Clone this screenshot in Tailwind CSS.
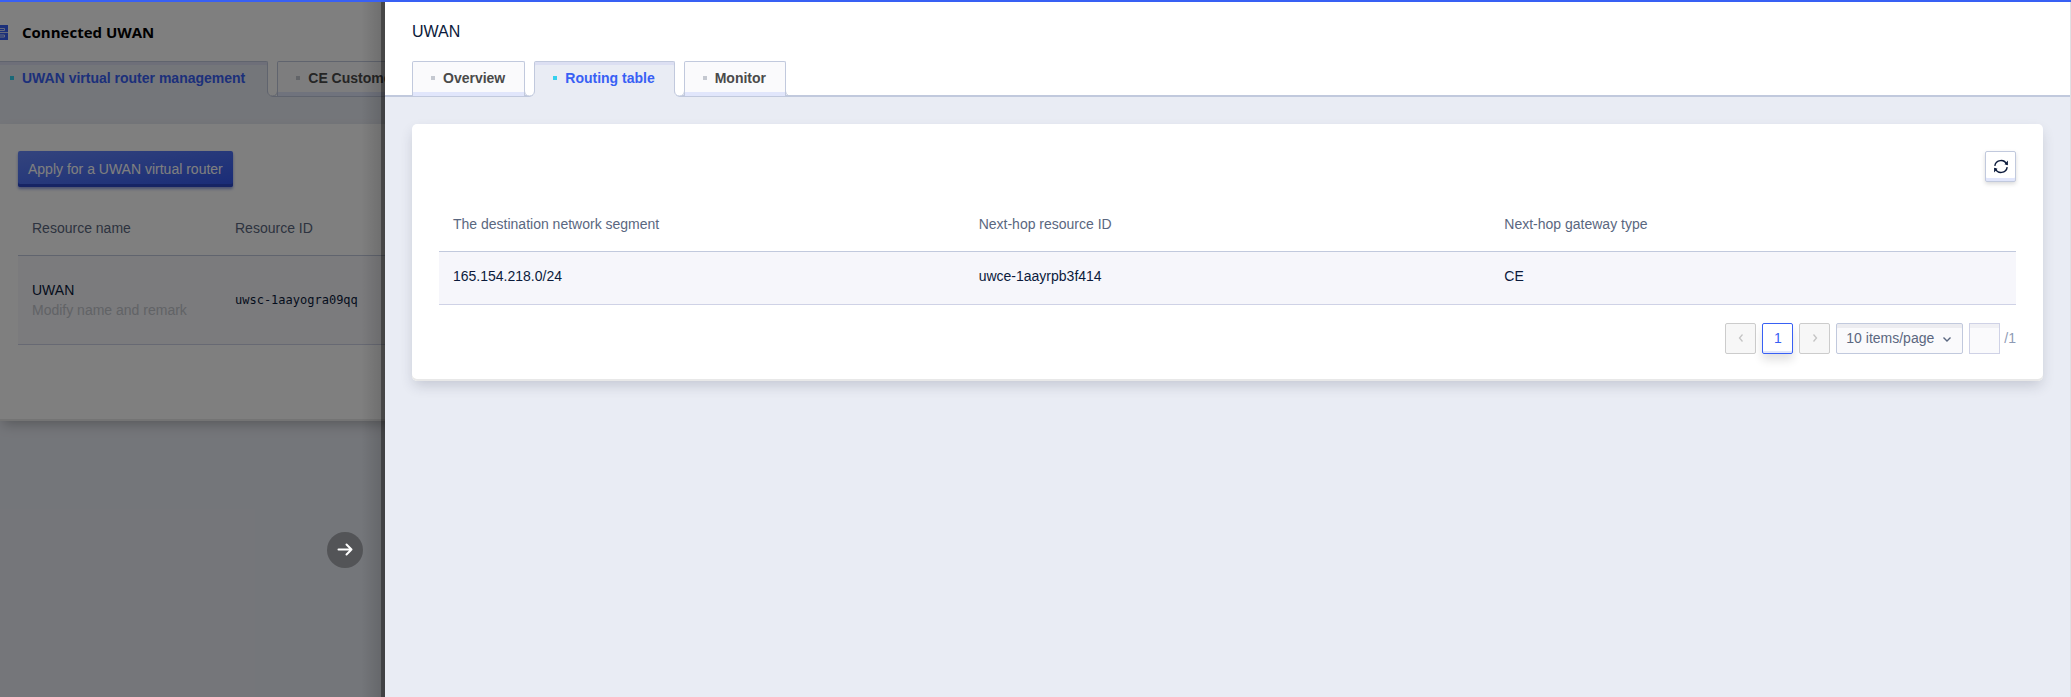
<!DOCTYPE html>
<html lang="en">
<head>
    <meta charset="UTF-8">
    <meta name="viewport" content="width=device-width, initial-scale=1.0">
    <title>UWAN</title>
    <script src="https://cdn.jsdelivr.net/npm/@tailwindcss/browser@4"></script>
</head>
<body class="min-h-screen flex overflow-hidden bg-[#e9ecf4] font-['Liberation_Sans',Arial,sans-serif] text-sm text-[#0b1a3b]">
    <!-- Loading bar -->
    <div class="absolute top-0 inset-x-0 h-0.5 bg-[#3860f4] z-20"></div>

    <!-- Page behind the drawer -->
    <div class="relative w-[385px] shrink-0 overflow-hidden">
        <div class="w-[900px]">
            <header class="bg-white pt-4 border-b border-[#c1c9dd]">
                <div class="flex items-center h-[33px] gap-[14px]">
                    <svg class="w-2 h-[15px]" viewBox="0 0 8 15" fill="none">
                        <path d="M0 0h8v15H0z" fill="#3860f4"/>
                        <path d="M0 3.500h4.500V5.500H0M0 7.500h8M0 10h4.500v2H0" stroke="#c9d3fb"/>
                    </svg>
                    <h1 class="font-['Open_Sans',sans-serif] text-[15px] font-bold text-black">Connected UWAN</h1>
                </div>
                <nav class="flex mt-3 h-[35px]">
                    <a href="#" class="flex items-center gap-2 h-9 pb-[3px] pl-[10px] pr-[22px] border-t border-r border-[#c1c9dd] rounded-tr-xs bg-[#e9ecf4] font-bold text-[#3860f4] shadow-[inset_0_3px_#dcdff2]">
                        <span class="size-1 bg-[#35d0ee]"></span>UWAN virtual router management
                    </a>
                    <svg class="w-[11px] h-9 -mx-px" viewBox="0 0 11 36" fill="none">
                        <path d="M6 36Q1 35 .5 31H0v5z" fill="#e9ecf4"/>
                        <path d="M.5 30Q1 35 5.500 35Q10 35 10.500 30" stroke="#c1c9dd"/>
                    </svg>
                    <a href="#" class="flex items-center gap-2 h-[35px] pb-[2px] px-[18px] border border-b-0 border-[#c1c9dd] rounded-t-xs bg-[#fafafc] font-bold text-[#4a4a4a] shadow-[inset_0_-4px_#e1e6fb]">
                        <span class="size-1 bg-[#c4c8d0]"></span>CE Customer gateway management
                    </a>
                </nav>
            </header>
            <main class="mt-[27px] h-[297px] bg-white pl-[18px] pt-[27px] shadow-[inset_0_-2px_#e8e8e8,0_6px_12px_-3px_rgba(0,0,0,0.25)]">
                <button type="button" class="h-9 px-[10px] rounded-xs bg-linear-to-br from-[#6788fb] to-[#3356ee] text-white shadow-[inset_0_-3px_#2c49c8,0_2px_3px_rgba(40,70,200,0.5)]">Apply for a UWAN virtual router</button>
                <table class="w-full mt-[15px] text-left">
                    <thead>
                        <tr class="h-[53px] border-b border-[#c1c9dd] text-[#5a6780]">
                            <th class="w-[203px] pl-[14px] font-normal">Resource name</th>
                            <th class="pl-[14px] font-normal">Resource ID</th>
                        </tr>
                    </thead>
                    <tbody>
                        <tr class="h-[89px] border-b border-[#cfd2e6] bg-[#f6f6fb]">
                            <td class="pl-[14px]">UWAN<br><a href="#" class="text-[#c3c6cc]">Modify name and remark</a></td>
                            <td class="pl-[14px] font-['DejaVu_Sans_Mono',monospace] text-xs">uwsc-1aayogra09qq</td>
                        </tr>
                    </tbody>
                </table>
            </main>
        </div>
        <div class="absolute inset-0 bg-black/50"></div>
        <div class="absolute inset-y-0 right-0 w-6 bg-linear-to-r from-transparent to-black/15"></div>
        <div class="absolute inset-y-0 right-0 w-1 bg-black/35"></div>
        <button type="button" aria-label="Close drawer" class="absolute top-[532px] left-[327px] size-9 rounded-full bg-[#535457] flex items-center justify-center">
            <svg class="size-4" viewBox="0 0 16 16" fill="none" stroke="#fff" stroke-width="2" stroke-linecap="round" stroke-linejoin="round">
                <path d="M1.500 7.500h13M9.500 2.500l5 5-5 5"/>
            </svg>
        </button>
    </div>

    <!-- Drawer -->
    <div class="flex-1 min-w-0 border-r border-[#dedfe3]">
        <header class="bg-white pt-5 px-[27px] border-b-2 border-[#c1c9dd]">
            <h2 class="text-base leading-6">UWAN</h2>
            <nav class="flex mt-[17px] h-[34px]">
                <a href="#" class="flex items-center gap-2 h-[35px] pb-[2px] pl-[18px] pr-[19px] border border-b-0 border-[#c1c9dd] rounded-t-xs bg-[#fafafc] font-bold text-[#4a4a4a] shadow-[inset_0_-4px_#e1e6fb]">
                    <span class="size-1 bg-[#c4c8d0]"></span>Overview
                </a>
                <svg class="w-[11px] h-9 -mx-px z-10" viewBox="0 0 11 36" fill="none">
                    <path d="M.5 30Q1 35 5.500 35Q10 35 10.500 30z" fill="#fff"/>
                    <path d="M5 36Q10 35 10.500 31H11v5z" fill="#e9ecf4"/>
                    <path d="M.5 30Q1 35 5.500 35Q10 35 10.500 30" stroke="#c1c9dd"/>
                </svg>
                <a href="#" class="flex items-center gap-2 h-9 pb-[3px] pl-[18px] pr-[19px] border border-b-0 border-[#c1c9dd] rounded-t-xs bg-[#e9ecf4] font-bold text-[#3860f4] shadow-[inset_0_3px_#dcdff2]">
                    <span class="size-1 bg-[#35d0ee]"></span>Routing table
                </a>
                <svg class="w-[11px] h-9 -mx-px z-10" viewBox="0 0 11 36" fill="none">
                    <path d="M.5 30Q1 35 5.500 35Q10 35 10.500 30z" fill="#fff"/>
                    <path d="M6 36Q1 35 .5 31H0v5z" fill="#e9ecf4"/>
                    <path d="M.5 30Q1 35 5.500 35Q10 35 10.500 30" stroke="#c1c9dd"/>
                </svg>
                <a href="#" class="flex items-center gap-2 h-[35px] pb-[2px] pl-[18px] pr-[19px] border border-b-0 border-[#c1c9dd] rounded-t-xs bg-[#fafafc] font-bold text-[#4a4a4a] shadow-[inset_0_-4px_#e1e6fb]">
                    <span class="size-1 bg-[#c4c8d0]"></span>Monitor
                </a>
                <svg class="w-[6px] h-9 -ml-px z-10" viewBox="0 0 6 36" fill="none">
                    <path d="M.5 30Q1 35 6 35" stroke="#c1c9dd"/>
                </svg>
            </nav>
        </header>

        <main class="m-[27px] p-[27px] rounded-[5px] bg-white shadow-[inset_0_-2px_#e8e8e8,0_6px_14px_-2px_rgba(40,45,70,0.2)]">
            <div class="flex justify-end">
                <button type="button" aria-label="Refresh" class="size-[31px] rounded-xs border border-[#c1c9dd] bg-white flex items-center justify-center shadow-[inset_0_-3px_#e1e6fb,0_2px_4px_rgba(0,0,0,0.15)]">
                    <svg class="size-4" viewBox="0 0 16 16" fill="none" stroke="#0b1a3b" stroke-width="1.400">
                        <path d="M1.800 6.800A6.200 6.200 0 0 1 13.700 5.500M14.200 8.200A6.200 6.200 0 0 1 2.300 9.500"/>
                        <path d="M14.900 1.500V6.200L11.500 5.200zM1.100 13.500V8.800L4.500 9.800z" fill="#0b1a3b" stroke="none"/>
                    </svg>
                </button>
            </div>
            <table class="w-full mt-4 table-fixed text-left">
                <thead>
                    <tr class="h-[53px] border-b border-[#c1c9dd] text-[#5a6780]">
                        <th class="pl-[14px] font-normal">The destination network segment</th>
                        <th class="pl-[14px] font-normal">Next-hop resource ID</th>
                        <th class="pl-[14px] font-normal">Next-hop gateway type</th>
                    </tr>
                </thead>
                <tbody>
                    <tr class="h-[53px] border-b border-[#cfd2e6] bg-[#f6f6fb]">
                        <td class="pl-[14px] pb-1">165.154.218.0/24</td>
                        <td class="pl-[14px] pb-1">uwce-1aayrpb3f414</td>
                        <td class="pl-[14px] pb-1">CE</td>
                    </tr>
                </tbody>
            </table>
            <div class="flex justify-end items-center gap-[6px] mt-[18px]">
                <button type="button" disabled aria-label="Previous page" class="size-[31px] rounded-xs border border-[#ccc] bg-[#f7f7f7] flex items-center justify-center">
                    <svg class="size-2" viewBox="0 0 8 8" fill="none" stroke="#c4c4c4" stroke-width="1.300"><path d="M5.500.5L2.500 4l3 3.500"/></svg>
                </button>
                <button type="button" class="size-[31px] rounded-xs border border-[#3860f4] bg-white text-[#3860f4] shadow-[inset_0_-2px_#e1e6fb,0_6px_10px_rgba(0,0,0,0.12)]">1</button>
                <button type="button" disabled aria-label="Next page" class="size-[31px] rounded-xs border border-[#ccc] bg-[#f7f7f7] flex items-center justify-center">
                    <svg class="size-2" viewBox="0 0 8 8" fill="none" stroke="#c4c4c4" stroke-width="1.300"><path d="M2.500.5l3 3.500-3 3.500"/></svg>
                </button>
                <div class="relative">
                    <select aria-label="Items per page" class="appearance-none w-[127px] h-[31px] pl-[9px] rounded-xs border border-[#c1c9dd] bg-[#fafafc] text-[#5a6780] shadow-[inset_0_4px_#ececf0]">
                        <option>10 items/page</option>
                    </select>
                    <svg class="absolute right-3 top-3 size-2 pointer-events-none" viewBox="0 0 8 8" fill="none" stroke="#5a6780" stroke-width="1.400"><path d="M.5 2.500L4 6l3.500-3.500"/></svg>
                </div>
                <label class="flex items-center gap-1 text-[#8e9ab5]">
                    <input type="text" aria-label="Page number" class="size-[31px] border border-[#cfd2e6] bg-[#fafafc] text-center shadow-[inset_0_4px_#f0f0f4]">
                    <span>/1</span>
                </label>
            </div>
        </main>
    </div>
</body>
</html>
